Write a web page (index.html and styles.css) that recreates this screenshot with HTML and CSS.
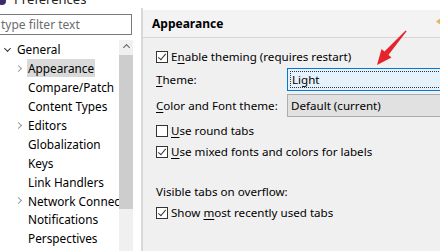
FILE: index.html
```html
<!DOCTYPE html>
<html>
<head>
<meta charset="utf-8">
<link rel="stylesheet" href="styles.css">
</head>
<body>
<div class="titlebar"><span class="appicon"></span><span class="title">Preferences</span></div>
<div class="main">
  <div class="left">
    <div class="filter">type filter text</div>
    <div class="treewrap">
      <ul class="tree">
        <li class="row top"><span class="tw open"></span>General</li>
        <li class="row child sel"><span class="tw"></span><span class="lbl">Appearance</span></li>
        <li class="row child"><span class="tw none"></span><span class="lbl">Compare/Patch</span></li>
        <li class="row child"><span class="tw none"></span><span class="lbl">Content Types</span></li>
        <li class="row child"><span class="tw"></span><span class="lbl">Editors</span></li>
        <li class="row child"><span class="tw none"></span><span class="lbl">Globalization</span></li>
        <li class="row child"><span class="tw none"></span><span class="lbl">Keys</span></li>
        <li class="row child"><span class="tw none"></span><span class="lbl">Link Handlers</span></li>
        <li class="row child"><span class="tw"></span><span class="lbl">Network Connections</span></li>
        <li class="row child"><span class="tw none"></span><span class="lbl">Notifications</span></li>
        <li class="row child"><span class="tw none"></span><span class="lbl">Perspectives</span></li>
      </ul>
      <div class="scrollbar">
        <div class="sbarrow"></div>
        <div class="thumb"></div>
      </div>
    </div>
  </div>
  <div class="divider"></div>
  <div class="right">
    <div class="header">
      <span class="htitle">Appearance</span>
      <span class="navicon"></span>
    </div>
    <div class="content">
      <div class="check on"><span class="box"></span><span>E<u>n</u>able theming (requires restart)</span></div>
      <div class="field">
        <span class="flabel"><u>T</u>heme:</span>
        <div class="combo focus"><span class="dots">Light</span></div>
      </div>
      <div class="field second">
        <span class="flabel"><u>C</u>olor and Font theme:</span>
        <div class="combo"><span class="ctext">Default (current)</span></div>
      </div>
      <div class="check"><span class="box"></span><span><u>U</u>se round tabs</span></div>
      <div class="check on"><span class="box"></span><span><u>U</u>se mixed fonts and colors for labels</span></div>
      <div class="section">Visible tabs on overflow:</div>
      <div class="check on"><span class="box"></span><span>Show <u>m</u>ost recently used tabs</span></div>
    </div>
  </div>
</div>
<svg class="arrow" width="440" height="251" viewBox="0 0 440 251">
  <polygon points="405.6,30.4 406.6,31.2 388.2,55.2 384.2,51.8" fill="#e5232a"/>
  <polygon points="377,65 381.5,49 391.5,57.5" fill="#e5232a"/>
</svg>
</body>
</html>
```
FILE: styles.css
```css
* { box-sizing: border-box; }
html, body {
  margin: 0;
  padding: 0;
}
body {
  width: 440px;
  height: 251px;
  overflow: hidden;
  position: relative;
  background: #ffffff;
  font-family: "Noto Sans", "Open Sans", sans-serif;
  font-size: 11.6px;
  color: #000;
}
u { text-decoration: underline; text-underline-offset: 2px; }

.titlebar {
  height: 10px;
  overflow: hidden;
  display: flex;
  align-items: flex-end;
  background: #fff;
}
.appicon {
  width: 8px;
  height: 8px;
  border-radius: 50%;
  background: #3b2b6b;
  margin-left: -2px;
  margin-bottom: 5px;
}
.title {
  margin-left: 8px;
  font-size: 13px;
  line-height: 13px;
  margin-bottom: 4px;
  color: #222;
}

.main {
  display: flex;
  height: 241px;
}
.left {
  width: 141px;
  background: #fff;
  display: flex;
  flex-direction: column;
}
.filter {
  margin-top: 4px;
  margin-left: -1px;
  width: 133px;
  height: 21px;
  border: 1px solid #7a7a7a;
  color: #6d6d6d;
  font-size: 12px;
  line-height: 19px;
  padding-left: 1px;
  white-space: nowrap;
}
.treewrap {
  margin-top: 5px;
  display: flex;
  flex: 1;
}
.tree {
  list-style: none;
  margin: 0;
  padding: 0;
  width: 119px;
  overflow: hidden;
  white-space: nowrap;
}
.row {
  height: 18.9px;
  display: flex;
  align-items: center;
  font-size: 11.8px;
}
.row.top { padding-left: 3px; }
.row.child { padding-left: 15px; }
.tw {
  width: 9px;
  height: 9px;
  position: relative;
  flex: none;
  margin-right: 3px;
}
.tw::before {
  content: "";
  position: absolute;
  left: 1px;
  top: 2px;
  width: 4px;
  height: 4px;
  border-right: 1px solid #9a9a9a;
  border-bottom: 1px solid #9a9a9a;
  transform: rotate(-45deg);
}
.tw.open::before {
  left: 2px;
  top: 1px;
  border-color: #333;
  transform: rotate(45deg);
}
.row.top .tw { margin-right: 5px; }
.tw.none::before { display: none; }
.lbl { padding: 1px 1px; }
.sel .lbl { background: #d9d9d9; }

.scrollbar {
  width: 14px;
  background: #f0f0f0;
  display: flex;
  flex-direction: column;
  align-items: center;
}
.sbarrow {
  width: 5px;
  height: 5px;
  margin-top: 5px;
  border-left: 1.5px solid #606060;
  border-top: 1.5px solid #606060;
  transform: rotate(45deg);
}
.thumb {
  margin-top: 5px;
  width: 14px;
  height: 154px;
  background: #cdcdcd;
}

.divider {
  width: 2px;
  margin-top: -2px;
  background: #d8d8d8;
}
.right {
  flex: 1;
  background: #f0f0f0;
  display: flex;
  flex-direction: column;
}
.header {
  height: 28px;
  border-bottom: 1px solid #d6d6d6;
  display: flex;
  align-items: center;
  justify-content: space-between;
  padding-left: 9px;
  background: #f3f3f3;
}
.htitle {
  font-weight: bold;
  font-size: 12px;
}
.navicon {
  width: 4px;
  height: 6px;
  background: #e8b45a;
  margin-top: -4px;
  clip-path: polygon(100% 0, 0 50%, 100% 100%);
}
.content {
  padding-left: 13px;
  display: flex;
  flex-direction: column;
  font-size: 11.6px;
  white-space: nowrap;
}
.check {
  display: flex;
  align-items: center;
  height: 21px;
}
.content > .check:first-child { margin-top: 8px; }
.box {
  width: 12px;
  height: 12px;
  border: 1px solid #333;
  background: #fff;
  margin-right: 3px;
  position: relative;
  flex: none;
}
.check.on .box::after {
  content: "";
  position: absolute;
  left: 3px;
  top: 0px;
  width: 3px;
  height: 7px;
  border-right: 1px solid #333;
  border-bottom: 1px solid #333;
  transform: rotate(40deg);
}
.field {
  display: flex;
  align-items: center;
  height: 23px;
  margin-top: 1px;
}
.field.second { margin-top: 3px; margin-bottom: 3px; }
.flabel {
  width: 131px;
  flex: none;
}
.combo {
  flex: 1;
  height: 23px;
  margin-right: -10px;
  background: #e1e1e1;
  border: 1px solid #adadad;
  display: flex;
  align-items: center;
  padding-left: 3px;
}
.combo.focus {
  background: #e5f1fb;
  border-color: #0078d7;
  padding: 2px;
}
.dots {
  flex: 1;
  height: 100%;
  border: 1px dotted #333;
  display: flex;
  align-items: center;
  padding-left: 1px;
}
.section {
  margin-top: 19px;
  height: 21px;
  display: flex;
  align-items: center;
}
.arrow {
  position: absolute;
  left: 0;
  top: 0;
  pointer-events: none;
}
```
